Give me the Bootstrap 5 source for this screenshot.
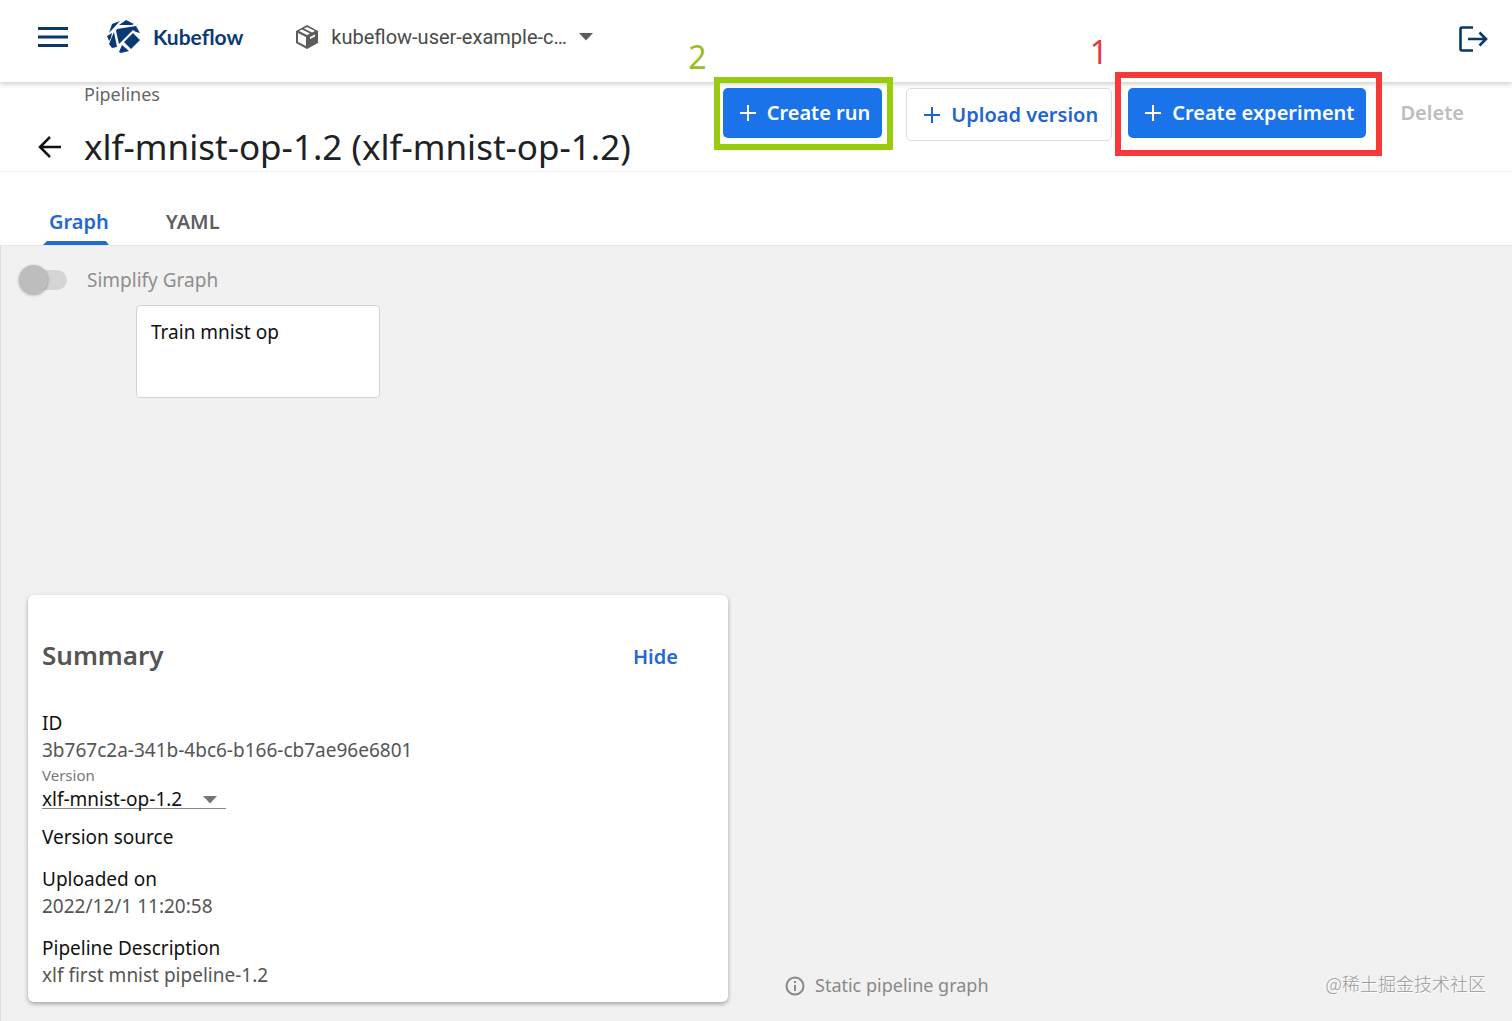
<!DOCTYPE html>
<html lang="en">
<head>
<meta charset="utf-8">
<meta name="viewport" content="width=device-width, initial-scale=1">
<title>Kubeflow Pipelines</title>
<link href="https://cdn.jsdelivr.net/npm/bootstrap@5.3.0/dist/css/bootstrap.min.css" rel="stylesheet">
<style>
  body { font-family: "Noto Sans", "Open Sans", "Noto Sans CJK SC", sans-serif; font-size: 19px; line-height: 27px; color: #202124; background: #fff; }
  svg { display: block; flex: none; }
  .icon-btn { border: 0; background: none; padding: 0; }
  .topbar { height: 82px; padding: 0 24px 8px 38px; box-shadow: 0 2px 5px rgba(0,0,0,.2); z-index: 2; }
  .brand { margin-left: 39px; gap: 12px; color: #0a3a75; font: 700 21px/28px Lato, "Open Sans", sans-serif; text-decoration: none; }
  .ns-pick { margin-left: 52px; gap: 12px; color: #4a4a4a; font-family: Roboto, sans-serif; font-size: 20px; }
  .ns-pick select, .version-row select { appearance: none; border: 0; padding: 0; background: none; color: inherit; }
  .ns-pick select { width: 236px; text-overflow: ellipsis; }
  .with-caret { display: grid; align-items: center; }
  .with-caret > * { grid-area: 1 / 1; }
  .with-caret > svg { justify-self: end; pointer-events: none; }
  .page-head { height: 90px; padding: 0 48px 0 38px; gap: 22px; border-bottom: 1px solid #eee; }
  .back-btn { padding-bottom: 13px; }
  .crumb { font-size: 18px; line-height: 25px; color: #666; text-decoration: none; }
  .page-title { font-size: 35px; line-height: 50px; font-weight: 400; margin: 15px 0 0; color: #202124; }
  .actions { padding-top: 6px; }
  .act { font-size: 20px; font-weight: 600; line-height: 28px; border-radius: 5px; height: 50px; padding: 0 12px 0 15px; gap: 9px; border: 0; white-space: nowrap; }
  .act-main { background: #1a73e8; color: #fff; }
  .act-line { background: #fff; color: #1f66cc; border: 1px solid #ddd; height: 53px; padding: 0 13px 0 15px; }
  .act-off, .act-off:disabled { background: none; color: #bdbdbd; padding: 0; margin-left: 34px; }
  .callout { position: absolute; border: 6px solid; pointer-events: none; }
  .callout-two { inset: -11px -11px -12px -9px; border-color: #99cc0c; }
  .callout-one { inset: -16px -16px -18px -13px; border-color: #f83838; }
  .callout-no { position: absolute; right: 100%; bottom: 100%; margin: 0 13px 6px 0; font-size: 32px; line-height: 40px; font-weight: 400; }
  .callout-two .callout-no { color: #98bf1d; }
  .callout-one .callout-no { color: #e23d3d; }
  .tabs { height: 73px; padding: 27px 0 0 43px; gap: 51px; }
  .tab-link { font-size: 20px; font-weight: 600; line-height: 46px; height: 46px; padding: 0 0 0 6px; color: #5f5f5f; text-decoration: none; }
  .tab-link.active { color: #2468d2; }
  .tab-link.active::after { content: ""; display: block; height: 4px; margin: -4px 0 0 -6px; background: #2468d2; clip-path: polygon(4px 0, calc(100% - 3px) 0, 100% 100%, 0 100%); }
  .canvas { background: #f1f1f1; border-top: 1px solid #e6e6e6; border-left: 1px solid #ddd; padding: 19px 0 19px 18px; }
  .toggle { width: 48px; height: 30px; appearance: none; margin: 0; position: relative; }
  .toggle::before { content: ""; display: block; width: 29px; height: 29px; border-radius: 50%; background: #bdbdbd; box-shadow: 0 1px 3px rgba(0,0,0,.35); position: relative; z-index: 1; }
  .toggle::after { content: ""; position: absolute; inset: 5px 0 5px 6px; border-radius: 10px; background: #d5d5d5; }
  .toggle-label { color: #8e8e8e; gap: 20px; }
  .node { width: 244px; height: 93px; margin: 10px 0 0 117px; border: 1px solid #d3d3d3; border-radius: 4px; padding: 13px 14px; background: #fff; color: #111; text-align: left; }
  .summary { width: 700px; margin-left: 9px; border: 0; border-radius: 6px; padding: 43px 50px 13px 14px; box-shadow: 0 2px 4px rgba(0,0,0,.32); }
  .summary-head { margin-bottom: 34px; }
  .summary h2 { font-size: 26px; line-height: 34px; font-weight: 600; margin: 0; color: #555; }
  .hide-btn { color: #2468d2; font-size: 20px; font-weight: 600; line-height: 38px; }
  .term { color: #111; font-weight: 400; margin: 0; }
  .term-gap { margin-top: 15px; }
  .val { color: #555; margin: 0; }
  .caption-sm { font-size: 15px; line-height: 22px; color: #777; }
  .version-row { width: 184px; height: 23px; border-bottom: 1px solid #888; color: #111; }
  .version-row svg { margin-right: 9px; }
  .static-note { margin: 0 0 3px 57px; gap: 10px; color: #888; font-size: 18px; }
  .watermark { margin: 0 26px 5px 0; font-size: 18px; color: #999; font-family: "Noto Sans CJK SC", sans-serif; text-shadow: 1px 1px 0 #fff; font-weight: 300; }
</style>
</head>
<body>
<div class="d-flex flex-column min-vh-100">
  <header class="topbar d-flex align-items-center position-relative bg-white">
    <button class="icon-btn" aria-label="Menu"><svg width="30" height="22" viewBox="0 0 30 22" stroke="#0a3768" stroke-width="3"><path d="M0 2.500h30M0 11h30M0 19.500h30"/></svg></button>
    <a href="#" class="brand d-flex align-items-center">
      <svg width="34" height="34" viewBox="0 0 34 34" fill="#0a3a75"><path d="M5 4 13 1 2 13ZM12 5 19 0 27 4 25 5ZM10 9 29 6 33 13 29 12 26 10 12 24 9 11ZM7 12 10 27 5 28 2 24ZM0 16 5 13 4 18 2 21ZM26 13 33 20 24 29 17 22ZM15 25 22 31 14 33 12 32Z"/></svg>
      Kubeflow</a>
    <label class="ns-pick d-flex align-items-center">
      <svg width="24" height="24" viewBox="0 0 24 24"><path fill="#5c5c5c" fill-rule="evenodd" d="M12 0 23 6V18L12 24 1 18V6ZM12 2 9 3.500 17 7.500 20 6ZM7 4.500 4 6 12 10 15 8.500ZM3 8V17L11 21V12ZM15 12 20 9.500V11.500L15 14Z"/></svg>
      <span class="with-caret"><select aria-label="Namespace"><option>kubeflow-user-example-com</option></select></span>
      <svg width="14" height="8" viewBox="0 0 14 8" fill="#5c5c5c"><path d="M0 0h14L7 7.500Z"/></svg>
    </label>
    <button class="icon-btn ms-auto mt-1" aria-label="Log out"><svg width="30" height="28" viewBox="0 0 30 28" fill="none" stroke="#0a3768" stroke-width="2.600"><path d="M15 2.500H4Q2.500 2.500 2.500 4V24Q2.500 25.500 4 25.500H15M10 14H28M21.500 7.500 28 14 21.500 20.500"/></svg></button>
  </header>

  <div class="page-head d-flex">
    <button class="icon-btn back-btn align-self-end" aria-label="Back"><svg width="24" height="22" viewBox="0 0 24 22" fill="none" stroke="#111" stroke-width="2.500"><path d="M12 1 2 11 12 21M2 11H23"/></svg></button>
    <div class="flex-grow-1 text-nowrap">
      <a href="#" class="crumb d-block">Pipelines</a>
      <h1 class="page-title">xlf-mnist-op-1.2 (xlf-mnist-op-1.2)</h1>
    </div>
    <div class="actions d-flex align-items-start position-relative z-3">
      <div class="position-relative"><button class="act act-main d-flex align-items-center"><svg width="20" height="20" viewBox="0 0 20 20" stroke="currentColor" stroke-width="2"><path d="M10 2V18M2 10H18"/></svg>Create run</button><div class="callout callout-two"><span class="callout-no">2</span></div></div>
      <button class="act act-line d-flex align-items-center ms-4"><svg width="20" height="20" viewBox="0 0 20 20" stroke="currentColor" stroke-width="2"><path d="M10 2V18M2 10H18"/></svg>Upload version</button>
      <div class="position-relative ms-3"><button class="act act-main d-flex align-items-center"><svg width="20" height="20" viewBox="0 0 20 20" stroke="currentColor" stroke-width="2"><path d="M10 2V18M2 10H18"/></svg>Create experiment</button><div class="callout callout-one"><span class="callout-no">1</span></div></div>
      <button class="act act-off" disabled>Delete</button>
    </div>
  </div>

  <nav class="tabs d-flex">
    <a href="#" class="tab-link active">Graph</a>
    <a href="#" class="tab-link">YAML</a>
  </nav>

  <main class="canvas d-flex flex-column flex-grow-1">
    <label class="toggle-label d-flex align-items-center"><input type="checkbox" class="toggle" disabled>Simplify Graph</label>
    <button class="node d-flex align-items-start">Train mnist op</button>
    <div class="d-flex align-items-end mt-auto">
      <section class="card summary">
        <div class="summary-head d-flex justify-content-between"><h2>Summary</h2><button class="icon-btn hide-btn">Hide</button></div>
        <dl class="m-0">
          <dt class="term">ID</dt><dd class="val">3b767c2a-341b-4bc6-b166-cb7ae96e6801</dd>
        </dl>
        <label class="caption-sm" for="version">Version</label>
        <div class="version-row with-caret"><select id="version"><option>xlf-mnist-op-1.2</option></select><svg width="14" height="8" viewBox="0 0 14 8" fill="#757575"><path d="M0 0h14L7 7.500Z"/></svg></div>
        <dl class="m-0">
          <dt class="term term-gap">Version source</dt>
          <dt class="term term-gap">Uploaded on</dt><dd class="val">2022/12/1 11:20:58</dd>
          <dt class="term term-gap">Pipeline Description</dt><dd class="val">xlf first mnist pipeline-1.2</dd>
        </dl>
      </section>
      <div class="static-note d-flex align-items-center"><svg width="20" height="20" viewBox="0 0 20 20" fill="none" stroke="#888" stroke-width="2"><circle cx="10" cy="10" r="8.500"/><path d="M10 9V15M10 5V7"/></svg>Static pipeline graph</div>
      <div class="watermark ms-auto">@稀土掘金技术社区</div>
    </div>
  </main>
</div>
<script src="https://cdn.jsdelivr.net/npm/bootstrap@5.3.0/dist/js/bootstrap.bundle.min.js"></script>
</body>
</html>
